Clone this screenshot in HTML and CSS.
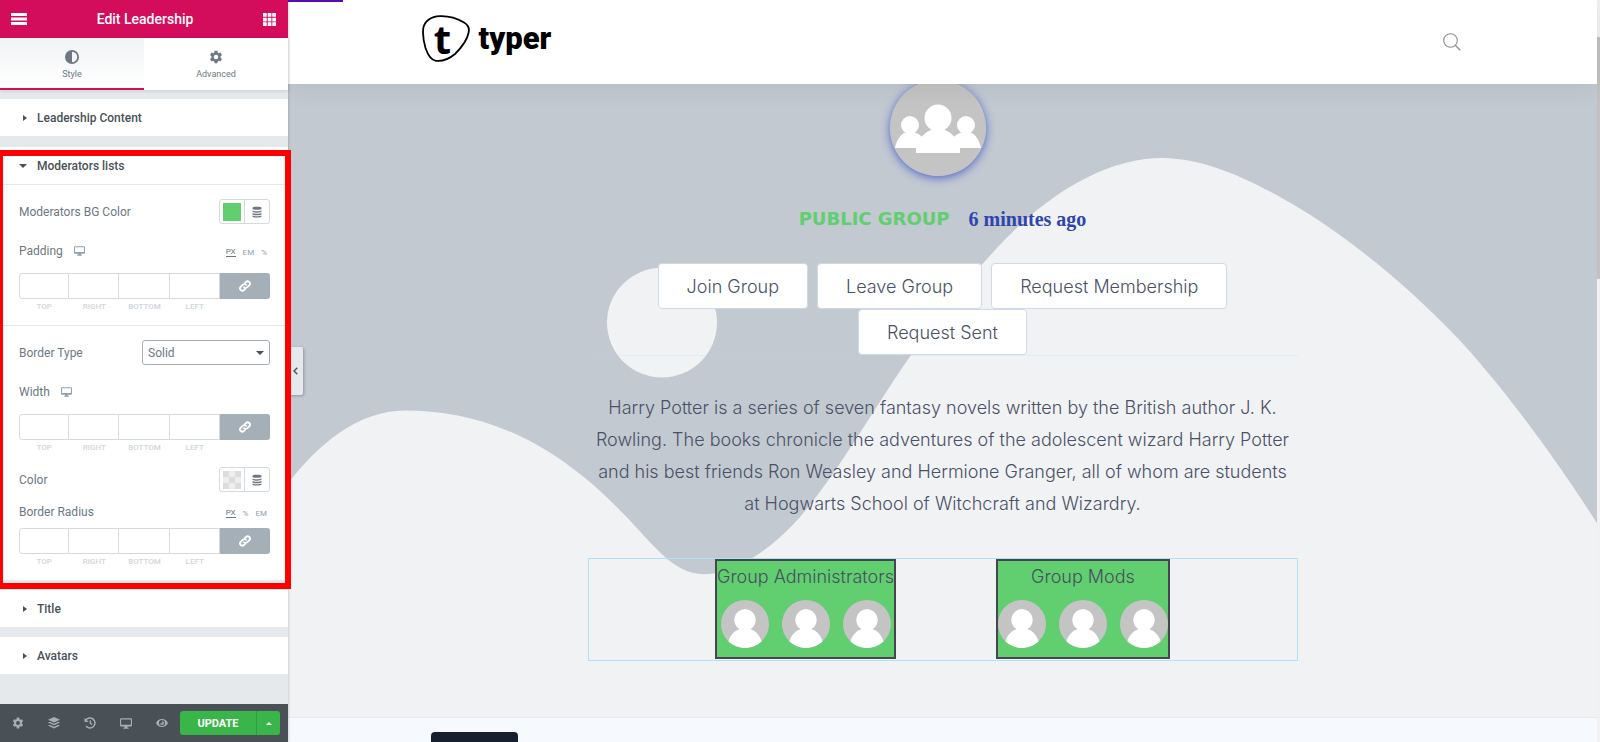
FILE: index.html
```html
<!DOCTYPE html>
<html lang="en">
<head>
<meta charset="utf-8">
<title>Edit Leadership</title>
<link rel="stylesheet" href="styles.css">
</head>
<body>
<svg class="defs" aria-hidden="true">
  <symbol id="gear" viewBox="0 0 16 16"><path fill-rule="evenodd" d="M6.4 0.8h3.2l.4 2.1 1.2.7 2-.7 1.6 2.7-1.6 1.5v1.8l1.6 1.5-1.6 2.7-2-.7-1.2.7-.4 2.1H6.400l-.4-2.1-1.2-.7-2 .7-1.600-2.700 1.600-1.500V7.100L1.200 5.600l1.600-2.700 2 .7 1.200-.7zM8 5.400a2.600 2.600 0 1 0 0 5.200 2.600 2.600 0 0 0 0-5.200z"/></symbol>
  <symbol id="desktop" viewBox="0 0 16 14"><path fill-rule="evenodd" d="M1.500 0h13A1.500 1.500 0 0 1 16 1.500v8a1.500 1.500 0 0 1-1.500 1.500H10v1.500h1.500V14h-7v-1.500H6V11H1.500A1.500 1.500 0 0 1 0 9.500v-8A1.500 1.500 0 0 1 1.500 0zm0 1.500v7h13v-7z"/></symbol>
  <symbol id="stack" viewBox="0 0 12 12"><path d="M1.500 1.800C1.500.4 10.500.4 10.500 1.800v1C10.500 4.200 1.500 4.200 1.500 2.800zM1.500 4.400c1.500 1 7.500 1 9 0v1.200c0 1.400-9 1.400-9 0zM1.500 7.100c1.500 1 7.500 1 9 0v1.200c0 1.400-9 1.400-9 0zM1.500 9.600c1.500 1 7.500 1 9 0v.8c0 1.500-9 1.500-9 0z"/></symbol>
  <symbol id="link" viewBox="0 0 24 24"><g fill="none" stroke="currentColor" stroke-width="3.600" stroke-linecap="round"><path d="M10 14.500a4.500 4.500 0 0 0 6.500 0l4-4a4.500 4.500 0 0 0-6.500-6.500l-2 2"/><path d="M14 9.500a4.500 4.500 0 0 0-6.500 0l-4 4a4.500 4.500 0 0 0 6.500 6.500l2-2"/></g></symbol>
  <symbol id="person" viewBox="0 0 48 48"><circle cx="24" cy="24" r="24" fill="#c4c4c4"/><path fill="#fff" d="M24 9a11 11 0 0 1 5.500 20.300C35 31 39 35.500 40.500 41.500A24 24 0 0 1 7.500 41.500C9 35.500 13 31 18.500 29.300A11 11 0 0 1 24 9z"/></symbol>
</svg>

<div class="app">
  <aside class="panel">
    <header class="panel-header">
      <button class="icon-btn" aria-label="Menu"><svg width="16" height="12" viewBox="0 0 16 12"><path d="M0 0h16v3H0zM0 4.500h16v3H0zM0 9h16v3H0z"/></svg></button>
      <h1>Edit Leadership</h1>
      <button class="icon-btn" aria-label="Widgets"><svg width="13" height="13" viewBox="0 0 13 13"><path d="M0 0h3.700v3.700H0zM4.700 0h3.700v3.700H4.700zM9.300 0H13v3.700H9.300zM0 4.700h3.700v3.700H0zM4.700 4.700h3.700v3.700H4.700zM9.300 4.700H13v3.700H9.300zM0 9.300h3.700V13H0zM4.700 9.300h3.700V13H4.700zM9.300 9.300H13V13H9.300z"/></svg></button>
    </header>
    <nav class="tabs">
      <button class="tab active"><svg width="14" height="14" viewBox="0 0 14 14"><path fill-rule="evenodd" d="M7 0a7 7 0 1 0 0 14A7 7 0 0 0 7 0zm0 1.800v10.400a5.200 5.200 0 0 0 0-10.400z"/></svg>Style</button>
      <button class="tab"><svg width="14" height="14"><use href="#gear"/></svg>Advanced</button>
    </nav>

    <div class="sections">
      <section class="section"><button class="section-title"><i class="caret right"></i>Leadership Content</button></section>

      <section class="section open">
        <button class="section-title"><i class="caret down"></i>Moderators lists</button>
        <div class="controls">
          <div class="row color-row">
            <span class="label">Moderators BG Color</span>
            <span class="picker"><button class="swatch green" aria-label="Pick background color"></button><button class="global" aria-label="Global colors"><svg width="12" height="12"><use href="#stack"/></svg></button></span>
          </div>
          <div class="row head padding-head">
            <span class="label">Padding <svg width="11" height="10"><use href="#desktop"/></svg></span>
            <span class="units"><button class="on">PX</button><button>EM</button><button>%</button></span>
          </div>
          <div class="dims">
            <label><input type="text">TOP</label><label><input type="text">RIGHT</label><label><input type="text">BOTTOM</label><label><input type="text">LEFT</label>
            <button class="link" aria-label="Link values"><svg width="12" height="12"><use href="#link"/></svg></button>
          </div>
          <hr>
          <div class="row type-row">
            <label class="label" for="border-type">Border Type</label>
            <span class="select"><select id="border-type"><option>Solid</option></select><i class="caret down"></i></span>
          </div>
          <div class="row head width-head"><span class="label">Width <svg width="11" height="10"><use href="#desktop"/></svg></span></div>
          <div class="dims">
            <label><input type="text">TOP</label><label><input type="text">RIGHT</label><label><input type="text">BOTTOM</label><label><input type="text">LEFT</label>
            <button class="link" aria-label="Link values"><svg width="12" height="12"><use href="#link"/></svg></button>
          </div>
          <div class="row border-color">
            <span class="label">Color</span>
            <span class="picker"><button class="swatch clear" aria-label="Pick border color"></button><button class="global" aria-label="Global colors"><svg width="12" height="12"><use href="#stack"/></svg></button></span>
          </div>
          <div class="row head radius-head">
            <span class="label">Border Radius</span>
            <span class="units"><button class="on">PX</button><button>%</button><button>EM</button></span>
          </div>
          <div class="dims">
            <label><input type="text">TOP</label><label><input type="text">RIGHT</label><label><input type="text">BOTTOM</label><label><input type="text">LEFT</label>
            <button class="link" aria-label="Link values"><svg width="12" height="12"><use href="#link"/></svg></button>
          </div>
        </div>
        <div class="highlight"></div>
      </section>

      <section class="section"><button class="section-title"><i class="caret right"></i>Title</button></section>
      <section class="section"><button class="section-title"><i class="caret right"></i>Avatars</button></section>
    </div>

    <footer class="panel-footer">
      <button class="tool" aria-label="Settings"><svg width="12" height="12"><use href="#gear"/></svg></button>
      <button class="tool" aria-label="Navigator"><svg width="12" height="12" viewBox="0 0 12 12"><path d="M6 0l6 2.800-6 2.800L0 2.800zM1.600 4.700L6 6.700l4.400-2L12 5.500 6 8.300 0 5.500zM1.600 7.700L6 9.700l4.400-2 1.600.8-6 2.900-6-2.900z"/></svg></button>
      <button class="tool" aria-label="History"><svg width="12" height="12" viewBox="0 0 12 12"><path d="M1.800 3.200A5 5 0 1 1 2 9" fill="none" stroke="currentColor" stroke-width="1.500"/><path d="M.5.800V5h4.200z"/><path d="M6.300 3.300v3l2 1.200" fill="none" stroke="currentColor" stroke-width="1.300"/></svg></button>
      <button class="tool" aria-label="Responsive mode"><svg width="12" height="11"><use href="#desktop"/></svg></button>
      <button class="tool" aria-label="Preview"><svg width="12" height="8" viewBox="0 0 12 8"><path fill-rule="evenodd" d="M6 0c2.600 0 4.800 1.600 6 4-1.200 2.400-3.400 4-6 4S1.200 6.400 0 4c1.200-2.400 3.400-4 6-4zm0 1a3 3 0 1 0 0 6 3 3 0 0 0 0-6zm0 1a2 2 0 1 1-2 2 1 1 0 0 0 2-2z"/></svg></button>
      <div class="publish"><button class="update">UPDATE</button><button class="more" aria-label="Save options"><i class="caret up"></i></button></div>
    </footer>
  </aside>

  <main class="preview">
    <button class="collapse" aria-label="Hide panel"><svg width="5" height="8" viewBox="0 0 5 8"><path d="M4.300.7L1 4l3.300 3.300" fill="none" stroke="currentColor" stroke-width="1.400"/></svg></button>
    <div class="page">
      <header class="site-header">
        <div class="progress"></div>
        <div class="bar">
          <a class="logo" href="#">
            <span class="mark"><svg width="48" height="48" viewBox="0 0 48 48"><path d="M18 1.200C28 .8 36 4 42 7.500 46.500 10 47.500 14 46.500 18 45 26 38 34 33 39 27 44 20 46.500 14 45.800 8 45 5.500 39 3.500 33 1.500 26 .5 20 1.200 14 2 6 9 1.600 18 1.200z" fill="none" stroke="#000" stroke-width="1.800"/></svg><b>t</b></span>
            <span class="word">typer</span>
          </a>
          <button class="search" aria-label="Search"><svg width="18" height="18" viewBox="0 0 18 18"><g fill="none" stroke="#8e8e8e"><circle cx="7.500" cy="7.500" r="6.800" stroke-width="1.100"/><path d="M12.300 12.300l5 5" stroke-width="1.300"/></g></svg></button>
        </div>
      </header>

      <section class="hero">
        <svg class="waves" viewBox="0 1 1309 634" preserveAspectRatio="none" aria-hidden="true"><path fill="#c2c9d1" d="M0 0H1309V441C1270 379 1217 307 1171 257C1123 206 1062 155 1004 121C960 95 915 75 874 75C825 75 775 103 736 138.500C697 174 659 223 622 274C585 327 548 394 510 437C485 465 448 492 416 492C385 492 365 462 335 431C262 355 190 328 117 328C70 328 30 362 0 401z"/><circle cx="374" cy="240" r="55" fill="#f1f2f4"/></svg>
        <div class="group">
          <svg class="group-avatar" width="96" height="96" viewBox="0 0 96 96"><circle cx="48" cy="48" r="48" fill="#c4c4c4"/><g fill="#fff"><circle cx="20" cy="45" r="9"/><circle cx="76" cy="45" r="9"/><path d="M5 68C7 59 11 54 16 52h8c5 2 8 4 10 8v8zM91 68c-2-9-6-14-11-16h-8c-5 2-8 4-10 8v8z"/><circle cx="48" cy="38" r="13.500"/><path d="M26 73v-5c2-9 8-15 15-18h14c7 3 13 9 15 18v5z"/></g></svg>
          <p class="meta"><span class="status">PUBLIC GROUP</span><span class="time">6 minutes ago</span></p>
          <div class="actions">
            <button>Join Group</button><button>Leave Group</button><button>Request Membership</button><button>Request Sent</button>
          </div>
          <p class="about">Harry Potter is a series of seven fantasy novels written by the British author J. K.<br>Rowling. The books chronicle the adventures of the adolescent wizard Harry Potter<br>and his best friends Ron Weasley and Hermione Granger, all of whom are students<br>at Hogwarts School of Witchcraft and Wizardry.</p>
          <div class="leaders">
            <div class="card"><h2>Group Administrators</h2><div class="people"><svg><use href="#person"/></svg><svg><use href="#person"/></svg><svg><use href="#person"/></svg></div></div>
            <div class="card"><h2>Group Mods</h2><div class="people"><svg><use href="#person"/></svg><svg><use href="#person"/></svg><svg><use href="#person"/></svg></div></div>
          </div>
        </div>
      </section>
      <section class="below"><div class="dark-tab"></div></section>
    </div>
    <div class="scrollbar"><div class="thumb"></div></div>
  </main>
</div>
</body>
</html>
```
FILE: styles.css
```css
* { box-sizing: border-box; }
body { margin: 0; font-family: Roboto, "Liberation Sans", sans-serif; color: #6d7882; }
h1, h2, p { margin: 0; font-weight: inherit; }
button { font: inherit; color: inherit; background: none; border: 0; padding: 0; display: flex; align-items: center; justify-content: center; }
svg { fill: currentColor; flex: none; display: block; }
.defs { position: absolute; width: 0; height: 0; }
.app { display: flex; height: 100vh; overflow: hidden; }

/* Editor panel */
.panel { width: 288px; flex: none; display: flex; flex-direction: column; background: #e6e9ec; position: relative; z-index: 3; box-shadow: 0 0 3px rgba(0, 0, 0, .25); }
.panel-header { height: 38px; flex: none; display: flex; align-items: center; justify-content: space-between; padding: 0 12px 0 11px; background: #d30c5c; color: #fff; }
.panel-header h1 { font-size: 14px; font-weight: 500; }
.tabs { display: flex; height: 52px; flex: none; background: #fff; box-shadow: 0 1px 4px rgba(0, 0, 0, .12); }
.tab { flex: 1; flex-direction: column; gap: 5px; font-size: 9px; padding-top: 3px; border-bottom: 2px solid transparent; }
.tab.active { border-bottom-color: #d30c5c; background: linear-gradient(#f1f3f5, #fff); }
.sections { flex: 1; padding-top: 9px; display: flex; flex-direction: column; gap: 10px; }
.section { background: #fff; }
.section-title { width: 100%; height: 37px; justify-content: flex-start; gap: 10px; padding-left: 18px; font-size: 12px; font-weight: 500; color: #495157; }
.caret { width: 9px; height: 8px; display: flex; justify-content: center; align-items: center; }
.caret::before { content: ""; border: 4px solid transparent; }
.caret.right::before { border-width: 3px 0 3px 4px; border-left-color: currentColor; margin-left: 4px; }
.caret.down::before { border-width: 4px 4px 0; border-top-color: currentColor; }
.caret.up::before { border-width: 0 3px 3px; border-bottom-color: currentColor; }
.open { position: relative; margin-top: 1px; }
.open .section-title { height: 38px; border-bottom: 1px solid #e6e9ec; }
.highlight { position: absolute; inset: 3px -3px -9px -3px; border: 6px solid #f00; pointer-events: none; }
.controls { padding: 14px 18px 13px 19px; }
.row { display: flex; align-items: center; justify-content: space-between; font-size: 12px; }
.label { display: flex; align-items: center; gap: 11px; }
.label svg { color: #94a0aa; }
.color-row { height: 25px; }
.picker { display: flex; width: 51px; height: 25px; border: 1px solid #d5dadf; border-radius: 3px; }
.picker button { flex: 1; }
.global { border-left: 1px solid #d5dadf; }
.swatch::before { content: ""; width: 18px; height: 18px; }
.swatch.green::before { background: #61ce70; }
.swatch.clear::before { background: repeating-conic-gradient(#eee 0 25%, #ddd 0 50%) 0 0 / 12px 12px; }
.head { height: 18px; align-items: center; }
.padding-head { margin-top: 18px; }
.units { display: flex; gap: 7px; font-size: 8px; line-height: 9px; padding: 2px 3px 0 0; color: #94a0aa; }
.units .on { color: #6d7882; border-bottom: 1px solid #6d7882; }
.dims { display: flex; margin-top: 13px; }
.dims label { flex: 1; text-align: center; font-size: 8px; font-weight: 500; line-height: 10px; color: #d0d6dc; min-width: 0; }
.dims input { display: block; width: 100%; height: 26px; margin-bottom: 3px; border: 1px solid #d5dadf; border-left-width: 0; background: #fff; }
.dims label:first-child input { border-left-width: 1px; border-radius: 3px 0 0 3px; }
.link { flex: 1; height: 26px; background: #a4afb7; color: #fff; border-radius: 0 3px 3px 0; }
hr { border: 0; border-top: 1px solid #e6e9ec; margin: 13px -18px 14px -19px; }
.type-row { height: 25px; }
.select { position: relative; width: 128px; height: 25px; }
.select select { width: 100%; height: 100%; appearance: none; border: 1px solid #a4afb7; border-radius: 3px; background: #fff; font: inherit; color: inherit; padding: 0 5px; }
.select .caret { position: absolute; right: 6px; top: 9px; color: #495157; }
.width-head { margin-top: 18px; }
.border-color { margin-top: 14px; }
.radius-head { margin-top: 11px; }
.width-head + .dims { margin-top: 13px; }
.radius-head + .dims { margin-top: 7px; }
.panel-footer { height: 38px; flex: none; display: flex; align-items: center; background: #495157; color: #a4afb7; padding-right: 8px; }
.tool { flex: 1; height: 100%; }
.publish { display: flex; height: 24px; width: 100px; border-radius: 3px; overflow: hidden; background: #39b54a; color: #fff; font-size: 11px; }
.update { flex: 1; font-weight: 700; }
.more { width: 24px; border-left: 1px solid #2f9c3f; }

/* Page preview */
.preview { flex: 1; min-width: 0; display: flex; position: relative; background: #f6fafe; }
.collapse { position: absolute; z-index: 2; left: 0; top: calc(50% - 24px); width: 15px; height: 48px; background: #e6e9ec; border-radius: 0 2px 2px 0; box-shadow: 1px 1px 3px rgba(0, 0, 0, .25); color: #495157; }
.page { flex: 1; min-width: 0; }
.site-header { position: relative; z-index: 1; height: 84px; background: #fff; box-shadow: 0 4px 24px rgba(0, 0, 0, .07); }
.progress { position: absolute; left: 0; top: 0; width: 55px; height: 2px; background: #5a0bab; }
.bar { width: 80%; max-width: 1042px; height: 78px; margin: 0 auto; display: flex; align-items: center; justify-content: space-between; }
.logo { display: flex; align-items: center; gap: 9px; color: #000; text-decoration: none; }
.mark { display: grid; place-items: center; }
.mark > * { grid-area: 1 / 1; }
.mark b { font: 700 40px/42px "Noto Sans", sans-serif; padding: 0 6px 0 0; }
.word { font-size: 31px; font-weight: 900; line-height: 40px; }
.search { padding: 6px 3px 0 0; }
.hero { display: flow-root; position: relative; background: #f1f2f4; border-bottom: 1px solid #e4e9ee; }
.waves { position: absolute; inset: 0; width: 100%; height: 100%; }
.group { position: relative; width: 710px; max-width: 100%; margin: 0 auto; padding-bottom: 56px; }
.group-avatar { display: block; margin: -4px auto 0; border-radius: 50%; box-shadow: 0 2px 10px #5266c8; position: relative; right: 5px; }
.meta { display: flex; align-items: center; justify-content: center; gap: 19px; height: 24px; margin-top: 31px; }
.status { font: 700 18px/24px "DejaVu Sans", sans-serif; color: #61ce70; }
.time { font: 700 20px/24px "Liberation Serif", serif; color: #2f45ad; }
.actions { display: flex; flex-wrap: wrap; justify-content: center; column-gap: 9px; padding: 32px 60px 0; border-bottom: 1px solid rgba(174, 224, 247, .25); }
.actions button { height: 46px; padding: 0 28px; background: #fff; border: 1px solid #d0dae6; border-radius: 4px; font-family: Inter, sans-serif; font-size: 18px; font-weight: 300; color: #4a5166; }
.about { margin-top: 36px; font-family: Inter, sans-serif; font-size: 18px; line-height: 32px; font-weight: 300; text-align: center; white-space: nowrap; color: #4a5166; }
.leaders { display: flex; justify-content: center; gap: 100px; margin-top: 38px; border: 1px solid #aee0f7; padding-bottom: 1px; }
.card { height: 100px; border: 2px solid #46464f; background: #61ce70; }
.card h2 { font-family: Inter, sans-serif; font-size: 18px; font-weight: 300; line-height: 32px; text-align: center; color: #46505f; }
.people { display: flex; justify-content: center; gap: 13px; margin-top: 7px; }
.people svg { width: 48px; height: 48px; }
.below { padding-left: 143px; padding-top: 14px; }
.dark-tab { width: 87px; height: 40px; border-radius: 4px; background: #17202e; }
.scrollbar { width: 3px; background: #f1f1f1; padding-top: 37px; }
.thumb { height: 242px; background: #c1c1c1; }
```
